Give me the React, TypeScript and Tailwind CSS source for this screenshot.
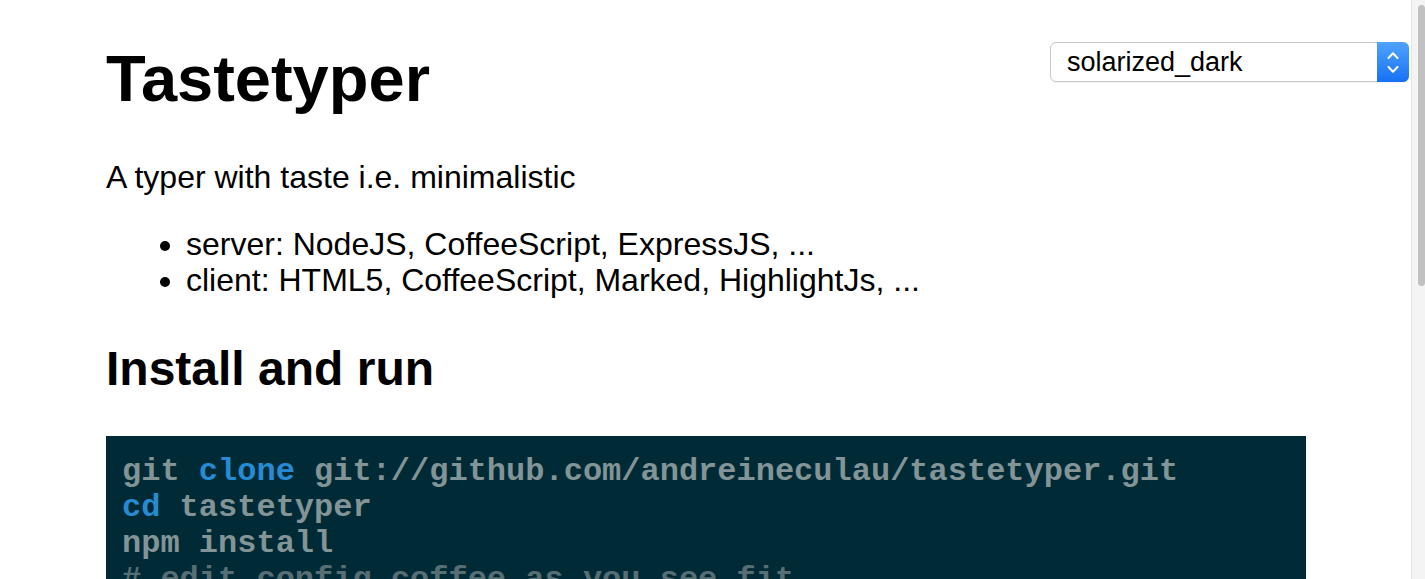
import React from 'react';

const sans = { fontFamily: '"Liberation Sans", Arial, sans-serif' };

const codeLines: { text: string; kw?: boolean; comment?: boolean }[][] = [
    [{ text: 'git ' }, { text: 'clone', kw: true }, { text: ' git://github.com/andreineculau/tastetyper.git' }],
    [{ text: 'cd', kw: true }, { text: ' tastetyper' }],
    [{ text: 'npm install' }],
    [{ text: '# edit config.coffee as you see fit', comment: true }],
    [{ text: 'npm start' }],
];

const ThemeSelect: React.FC = () => {
    return (
        <div className="absolute top-[42px] right-[2px] w-[359px] h-[40px] flex bg-white border border-[#c9c9c9] rounded-[6px] shadow-[0_1px_1px_rgba(0,0,0,0.06)]">
            <div className="flex-1 flex items-center pl-[16px] text-[27px] text-black" style={sans}>
                solarized_dark
            </div>
            <div className="w-[32px] -my-px -mr-px rounded-r-[6px] bg-gradient-to-b from-[#4fa3fd] to-[#1670f4] flex flex-col items-center justify-center gap-[7px]">
                <svg width="12" height="7" viewBox="0 0 12 7" fill="none">
                    <path d="M1.5 6 L6 1.3 L10.5 6" stroke="white" strokeWidth="2" strokeLinecap="round" strokeLinejoin="round" />
                </svg>
                <svg width="12" height="7" viewBox="0 0 12 7" fill="none">
                    <path d="M1.5 1 L6 5.7 L10.5 1" stroke="white" strokeWidth="2" strokeLinecap="round" strokeLinejoin="round" />
                </svg>
            </div>
        </div>
    );
};

const App: React.FC = () => {
    return (
        <div className="h-[579px] w-full overflow-hidden flex bg-white">
            <div className="relative flex-1 min-w-0">
                <div className="ml-[106px] w-[1200px] text-black" style={sans}>
                    <h1 className="mt-[42px] text-[65px] leading-[74px] font-bold">Tastetyper</h1>
                    <p className="mt-[43px] text-[32px] leading-[36px]">A typer with taste i.e. minimalistic</p>
                    <ul className="mt-[31px] pl-[80px] list-disc text-[32px] leading-[36px]">
                        <li>server: NodeJS, CoffeeScript, ExpressJS, ...</li>
                        <li>client: HTML5, CoffeeScript, Marked, HighlightJs, ...</li>
                    </ul>
                    <h2 className="mt-[43px] text-[48px] leading-[55px] font-bold">Install and run</h2>
                    <pre
                        className="mt-[40px] bg-[#002b36] pt-[18px] pb-[16px] px-[16px] text-[32px] leading-[36px] font-bold text-[#839496]"
                        style={{ fontFamily: '"Liberation Mono", "Courier New", monospace' }}
                    >
                        {codeLines.map((line, i) => (
                            <div key={i}>
                                {line.map((seg, j) => (
                                    <span
                                        key={j}
                                        className={seg.kw ? 'text-[#268bd2]' : seg.comment ? 'text-[#586e75]' : ''}
                                    >
                                        {seg.text}
                                    </span>
                                ))}
                            </div>
                        ))}
                    </pre>
                </div>
                <ThemeSelect />
            </div>
            <div className="w-[14px] shrink-0 bg-[#f4f4f4] border-l border-[#e6e6e6] pt-[5px] pl-[6px]">
                <div className="w-[7px] h-[281px] rounded-full bg-[#c1c1c1]" />
            </div>
        </div>
    );
};

export default App;
